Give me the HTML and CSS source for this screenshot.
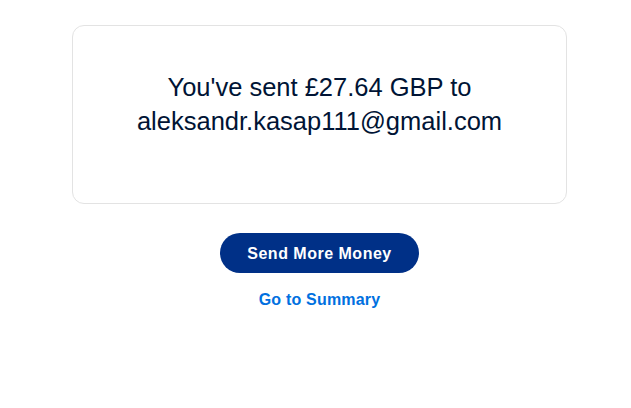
FILE: index.html
```html
<!DOCTYPE html>
<html>
<head>
<meta charset="utf-8">
<link rel="stylesheet" href="styles.css">
</head>
<body>
<main class="page">
  <section class="card">
    <p class="message">You've sent £27.64 GBP to aleksandr.kasap111@gmail.com</p>
  </section>
  <div class="actions">
    <button class="primary">Send More Money</button>
    <a class="link" href="#">Go to Summary</a>
  </div>
</main>
</body>
</html>
```
FILE: styles.css
```css
html, body {
  margin: 0;
  padding: 0;
  background: #ffffff;
}
body {
  font-family: "Liberation Sans", Arial, sans-serif;
}
.page {
  width: 495px;
  margin-left: 72px;
  padding-top: 25px;
  display: flex;
  flex-direction: column;
  align-items: center;
}
.card {
  box-sizing: border-box;
  width: 495px;
  height: 179px;
  border: 1px solid #e3e3e3;
  border-radius: 12px;
  display: flex;
  align-items: center;
  justify-content: center;
  padding: 0 40px 22px;
}
.message {
  margin: 0;
  text-align: center;
  font-size: 25.5px;
  line-height: 34px;
  color: #001435;
}
.actions {
  margin-top: 29px;
  display: flex;
  flex-direction: column;
  align-items: center;
}
.primary {
  width: 199px;
  height: 40px;
  padding: 2px 0 0;
  border: none;
  border-radius: 20px;
  background: #003087;
  color: #ffffff;
  font-family: "Liberation Sans", Arial, sans-serif;
  font-weight: bold;
  font-size: 16px;
  letter-spacing: 0.5px;
  cursor: pointer;
}
.link {
  margin-top: 18px;
  color: #0070e0;
  font-weight: bold;
  font-size: 16px;
  letter-spacing: 0.2px;
  text-decoration: none;
}
```
